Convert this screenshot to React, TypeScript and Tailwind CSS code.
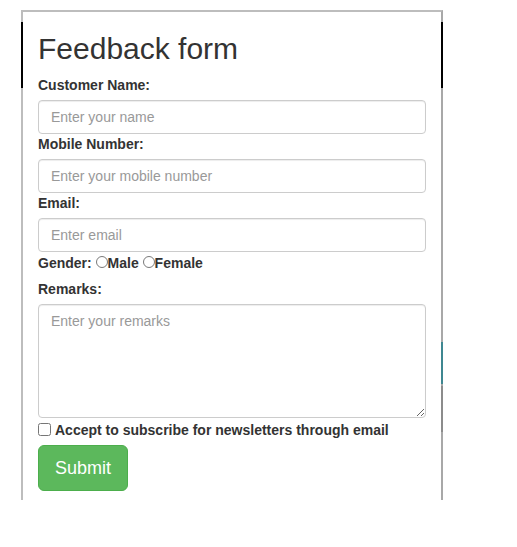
import React from "react";

const font = { fontFamily: '"Liberation Sans", Arial, Helvetica, sans-serif' };

function Label({ children }: { children: React.ReactNode }) {
  return (
    <label className="block text-[14px] leading-[20px] font-bold text-[#333] mb-[5px]">
      {children}
    </label>
  );
}

function Input({ placeholder }: { placeholder: string }) {
  return (
    <input
      type="text"
      placeholder={placeholder}
      className="block w-full h-[34px] px-[12px] py-[6px] text-[14px] leading-[20px] text-[#555] bg-white border border-[#ccc] rounded-[4px] shadow-[inset_0_1px_1px_rgba(0,0,0,0.075)] placeholder:text-[#999] outline-none"
    />
  );
}

export default function App() {
  return (
    <div className="w-[517px] h-[547px] bg-white overflow-hidden" style={font}>
      <div className="pt-[10px] pl-[21px]">
        <div className="relative w-[422px] h-[490px] border-t-2 border-l-2 border-r-2 border-[#bdbdbd] border-r-[#a8a8a8] px-[15px] bg-white">
          <span className="absolute left-[-2px] top-[10px] w-[2px] h-[66px] bg-black" />
          <span className="absolute right-[-2px] top-[10px] w-[2px] h-[66px] bg-black" />
          <span className="absolute right-[-2px] top-[330px] w-[2px] h-[42px] bg-[#3f8791]" />
          <span className="absolute right-[-2px] top-[374px] w-[2px] h-[46px] bg-[#8c8c8c]" />

          <h2 className="mt-[20px] mb-[10px] text-[30px] leading-[33px] font-normal text-[#333]">
            Feedback form
          </h2>

          <Label>Customer Name:</Label>
          <Input placeholder="Enter your name" />

          <Label>Mobile Number:</Label>
          <Input placeholder="Enter your mobile number" />

          <Label>Email:</Label>
          <Input placeholder="Enter email" />

          <div className="h-[27px] pt-[1px] text-[14px] leading-[20px] font-bold text-[#333] flex items-start">
            <span>Gender:&nbsp;</span>
            <span className="inline-block w-[12px] h-[12px] mt-[3px] rounded-full border border-[#7a7a7a] bg-white" />
            <span>Male&nbsp;</span>
            <span className="inline-block w-[12px] h-[12px] mt-[3px] rounded-full border border-[#7a7a7a] bg-white" />
            <span>Female</span>
          </div>

          <Label>Remarks:</Label>
          <textarea
            rows={5}
            placeholder="Enter your remarks"
            className="block w-full h-[114px] px-[12px] py-[6px] text-[14px] leading-[20px] text-[#555] bg-white border border-[#ccc] rounded-[4px] shadow-[inset_0_1px_1px_rgba(0,0,0,0.075)] placeholder:text-[#999] outline-none resize-y"
          />

          <div className="mt-[2px] h-[20px] flex items-start text-[14px] leading-[20px] font-bold text-[#333]">
            <input type="checkbox" className="m-0 mt-[3px] w-[13px] h-[13px] mr-[4px]" />
            <span>Accept to subscribe for newsletters through email</span>
          </div>

          <button
            type="button"
            className="mt-[5px] h-[46px] px-[16px] py-[10px] text-[18px] leading-[24px] text-white bg-[#5cb85c] border border-[#4cae4c] rounded-[6px]"
          >
            Submit
          </button>
        </div>
      </div>
    </div>
  );
}
